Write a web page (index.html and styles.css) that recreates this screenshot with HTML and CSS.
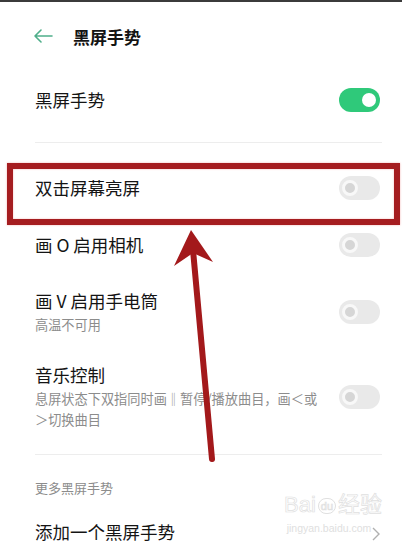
FILE: index.html
```html
<!DOCTYPE html>
<html lang="zh-CN">
<head>
    <meta charset="UTF-8">
    <meta name="viewport" content="width=device-width, initial-scale=1.0">
    <title>黑屏手势</title>
    <link rel="stylesheet" href="styles.css">
</head>
<body>
    <div class="page">
        <div class="header">
            <svg class="back" width="20" height="14" viewBox="0 0 20 14">
                <path d="M19 7H2M8 1L2 7l6 6" fill="none" stroke="#4fae8a" stroke-width="1.6" stroke-linecap="round" stroke-linejoin="round"/>
            </svg>
            <span class="header-title">黑屏手势</span>
        </div>

        <div class="row row-main">
            <div class="row-text"><div class="row-title">黑屏手势</div></div>
            <div class="switch on"><span class="knob"></span></div>
        </div>
        <div class="divider first"></div>

        <div class="row row-double">
            <div class="row-text"><div class="row-title">双击屏幕亮屏</div></div>
            <div class="switch"><span class="knob"></span></div>
        </div>
        <div class="row row-camera">
            <div class="row-text"><div class="row-title">画 O 启用相机</div></div>
            <div class="switch"><span class="knob"></span></div>
        </div>
        <div class="row row-torch">
            <div class="row-text">
                <div class="row-title">画 V 启用手电筒</div>
                <div class="row-sub">高温不可用</div>
            </div>
            <div class="switch"><span class="knob"></span></div>
        </div>
        <div class="row row-music">
            <div class="row-text">
                <div class="row-title">音乐控制</div>
                <div class="row-sub">息屏状态下双指同时画‖暂停/播放曲目，画＜或<br>＞切换曲目</div>
            </div>
            <div class="switch"><span class="knob"></span></div>
        </div>
        <div class="divider"></div>

        <div class="section-label">更多黑屏手势</div>
        <div class="row row-add">
            <div class="row-text"><div class="row-title">添加一个黑屏手势</div></div>
            <svg class="chevron" width="8" height="14" viewBox="0 0 8 14">
                <path d="M1 1l6 6-6 6" fill="none" stroke="#b0b0b0" stroke-width="1.4"/>
            </svg>
        </div>

        <!-- annotation drawn over the screenshot -->
        <div class="highlight"></div>
        <svg class="pointer" width="402" height="545" viewBox="0 0 402 545">
            <line x1="212" y1="459" x2="193" y2="250" stroke="#a3191b" stroke-width="6" stroke-linecap="round"/>
            <polygon points="191,230 174,266 193,253 213,262" fill="#a3191b"/>
        </svg>
        <div class="watermark">
            <div class="wm-logo">Bai<span class="paw">du</span>经验</div>
            <div class="wm-url">jingyan.baidu.com</div>
        </div>
    </div>
</body>
</html>
```

FILE: styles.css
```css
body {
    margin: 0;
    background-color: #fff;
    font-family: "Noto Sans CJK SC", "Noto Sans", sans-serif;
    color: #141414;
    overflow: hidden;
}
.page {
    position: relative;
    width: 402px;
    height: 545px;
    border-top: 2px solid #3b3b3b;
    box-sizing: border-box;
}
.header {
    display: flex;
    align-items: center;
    height: 68px;
    padding-left: 33px;
}
.back {
    margin-right: 20px;
}
.header-title {
    font-size: 17px;
    font-weight: 700;
}
.row {
    display: flex;
    align-items: center;
    justify-content: space-between;
    padding: 0 22px 0 35px;
}
.row-title {
    font-size: 17.5px;
    line-height: 24px;
}
.row-sub {
    font-size: 13.2px;
    line-height: 21px;
    color: #8c8c8c;
    margin-top: 1px;
}
.row-main {
    height: 60px;
}
.divider {
    height: 1px;
    background-color: #ededed;
    margin: 0 20px 0 35px;
}
.divider.first {
    margin-top: 12px;
}
.row-double {
    height: 58px;
    margin-top: 16px;
}
.row-camera {
    height: 56px;
}
.row-torch {
    padding-top: 16px;
    padding-bottom: 12px;
}
.row-music {
    padding-top: 16px;
    padding-bottom: 24px;
}
.section-label {
    font-size: 13px;
    line-height: 20px;
    color: #8c8c8c;
    padding-left: 35px;
    margin-top: 23px;
}
.row-add {
    margin-top: 22px;
}
.chevron {
    margin-top: 4px;
}
.switch {
    position: relative;
    width: 41px;
    height: 24px;
    border-radius: 12px;
    background-color: #e9e9e9;
    flex-shrink: 0;
}
.switch .knob {
    position: absolute;
    top: 4px;
    left: 3px;
    width: 10px;
    height: 10px;
    border-radius: 50%;
    background-color: #d6d6d6;
    border: 3px solid #f8f8f8;
}
.switch.on {
    background-color: #2fc97a;
}
.switch.on .knob {
    top: 5px;
    left: auto;
    right: 4px;
    width: 14px;
    height: 14px;
    border: none;
    background-color: #fff;
}
.highlight {
    position: absolute;
    left: 7px;
    top: 161px;
    width: 381px;
    height: 50px;
    border: 6px solid #a51d20;
    box-shadow: 0 0 2px #f2b3b3, inset 0 0 2px #f2b3b3;
}
.pointer {
    position: absolute;
    left: 0;
    top: -2px;
}
.watermark {
    position: absolute;
    left: 284px;
    top: 490px;
    width: 90px;
    font-family: "Liberation Sans", sans-serif;
    text-align: center;
}
.wm-logo {
    font-size: 22px;
    line-height: 26px;
    color: #fff;
    -webkit-text-stroke: 0.7px #e0e0e0;
    white-space: nowrap;
}
.wm-logo .paw {
    display: inline-block;
    font-size: 11px;
    line-height: 14px;
    margin: 0 2px;
    padding: 0 2px;
    border: 1px solid #e0e0e0;
    border-radius: 8px;
    vertical-align: middle;
}
.wm-url {
    font-size: 10.5px;
    line-height: 16px;
    color: #e0e0e0;
    margin-top: 2px;
}
```
